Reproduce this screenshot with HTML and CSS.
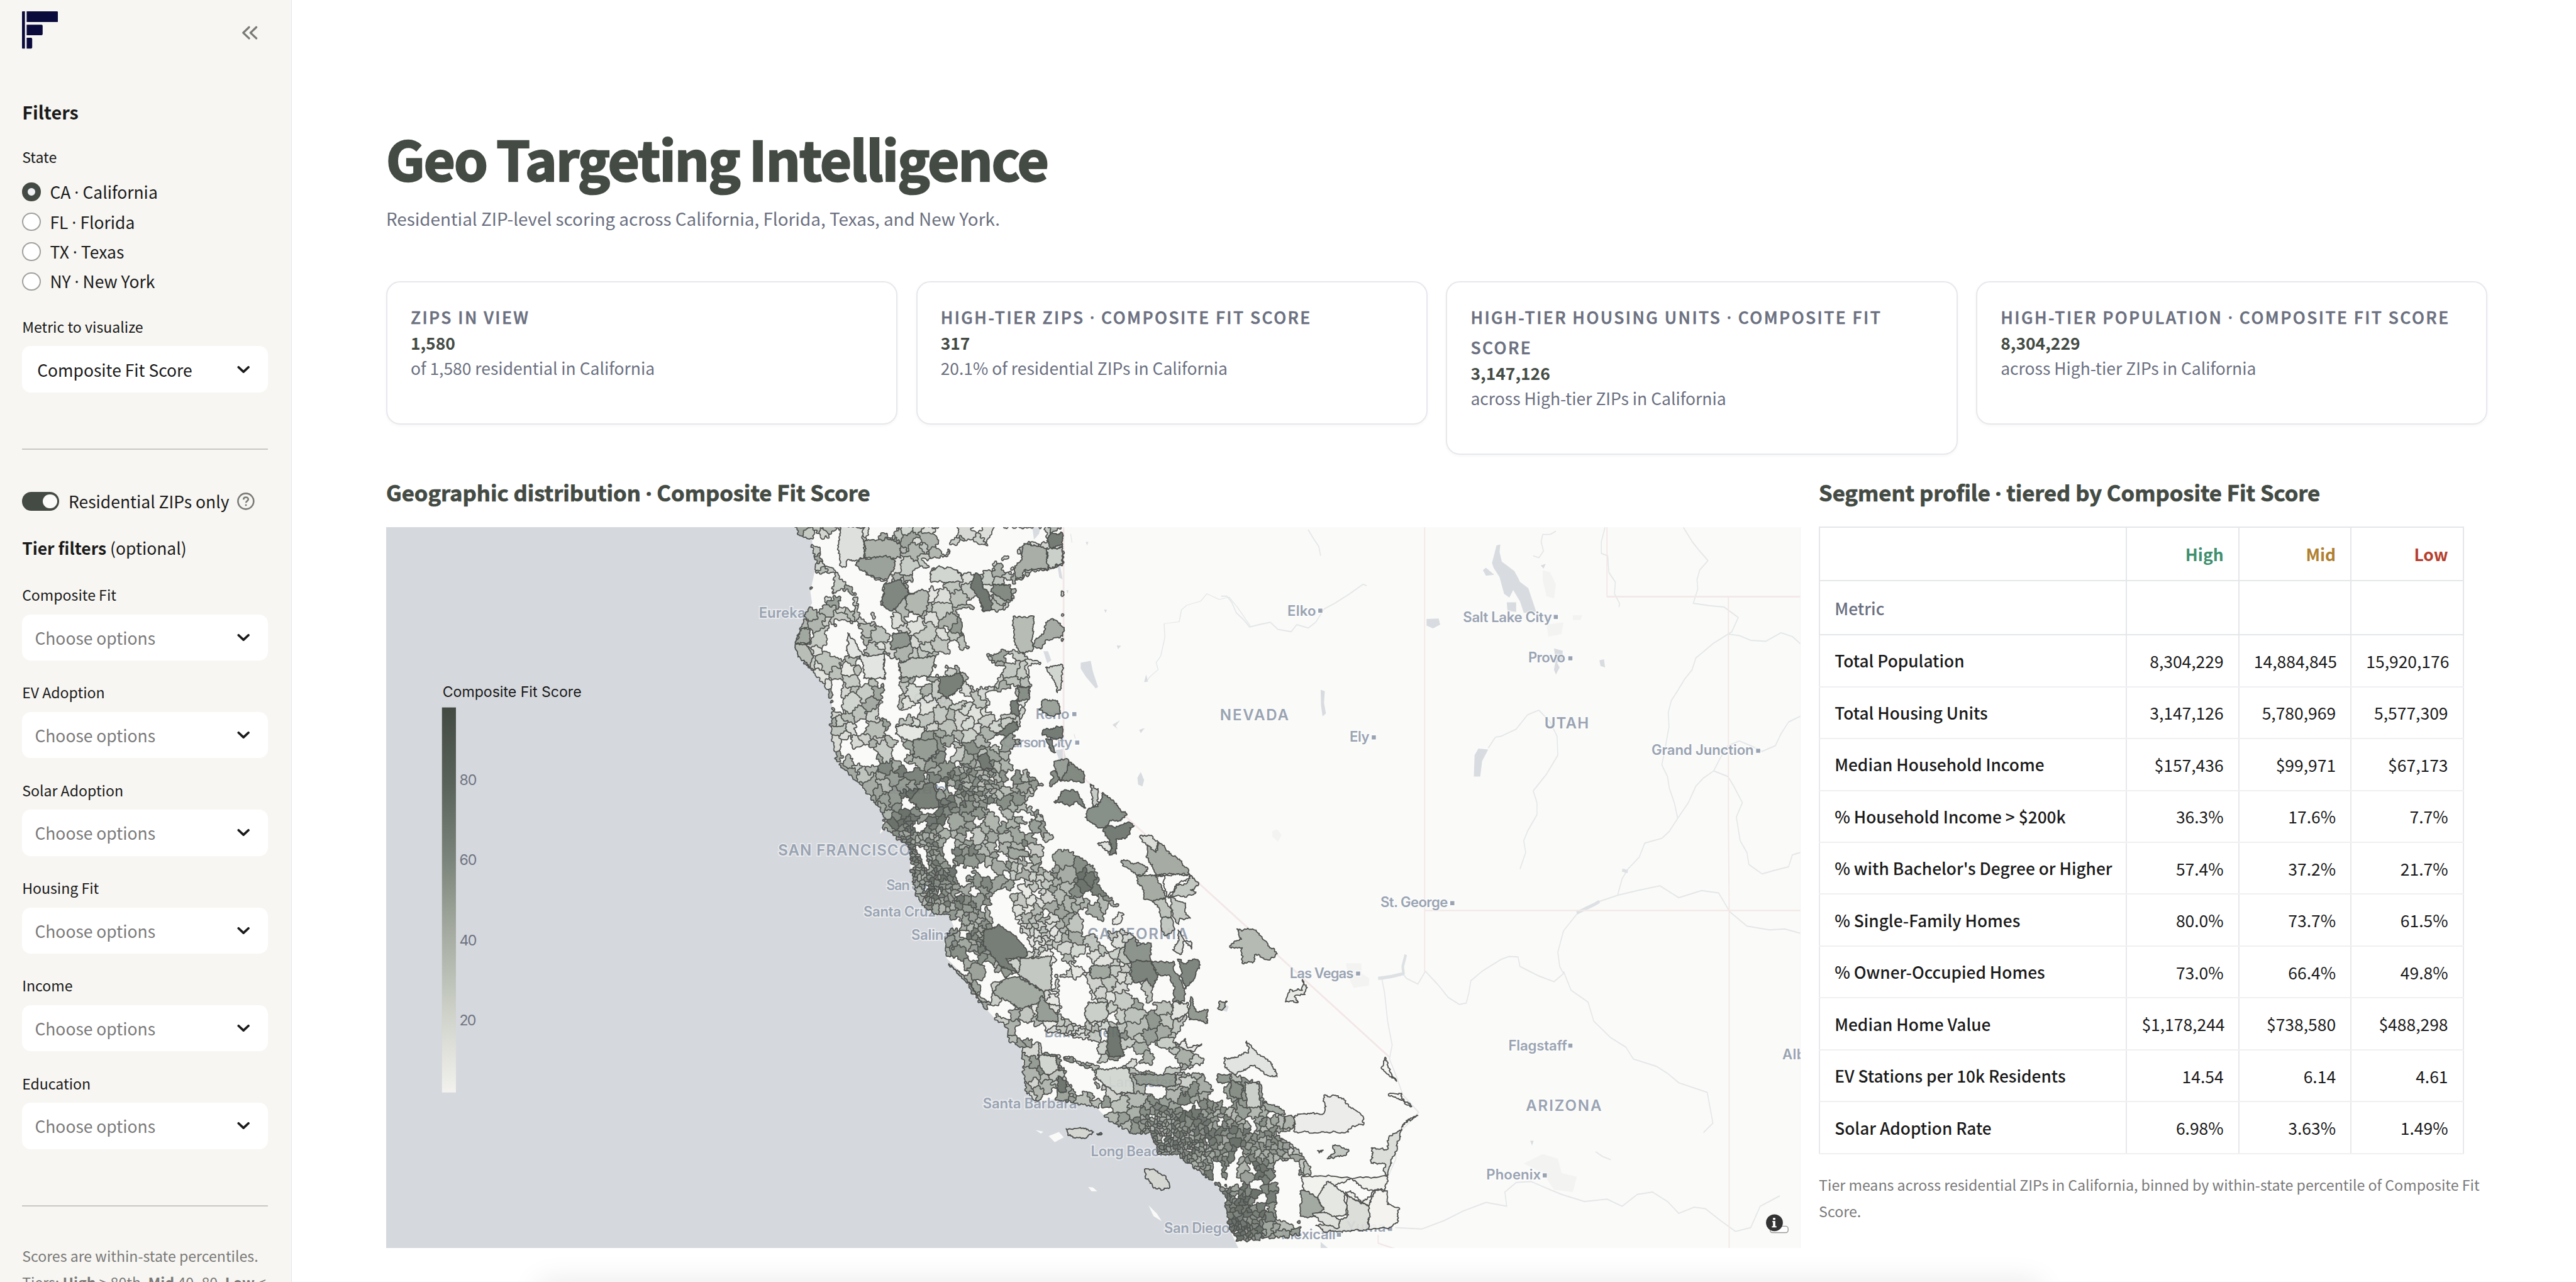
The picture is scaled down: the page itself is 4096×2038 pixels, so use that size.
FILE: index.html
```html
<!DOCTYPE html>
<html lang="en">

<head>
  <meta charset="UTF-8">
  <meta name="viewport" content="width=device-width, initial-scale=1.0">
  <title>Geo Targeting Intelligence</title>
  <link rel="stylesheet" href="styles.css">
</head>

<body>
  <div class="app">
    <aside class="sidebar">
      <div class="sidebar-head">
        <svg class="logo" viewBox="0 0 62 64">
          <path d="M0 1q0-1 1-1h4v64H1q-1 0-1-1z" />
          <path d="M8 0h52q2 0 2 2v14.500q0 2-2 2H8zM8 23h25.500q2 0 2 2v14q0 2-2 2H8zM8 45.500h7.500q2 0 2 2V62q0 2-2 2H8z" />
        </svg>
        <svg class="collapse" viewBox="0 0 28 24">
          <path d="M13 2.500L3 12l10 9.500M25.500 2.500L15.500 12l10 9.500" />
        </svg>
      </div>

      <h2>Filters</h2>
      <div class="label">State</div>
      <div class="radios">
        <div class="radio"><span class="dot on"></span><span>CA <i>·</i> California</span></div>
        <div class="radio"><span class="dot"></span><span>FL <i>·</i> Florida</span></div>
        <div class="radio"><span class="dot"></span><span>TX <i>·</i> Texas</span></div>
        <div class="radio"><span class="dot"></span><span>NY <i>·</i> New York</span></div>
      </div>

      <div class="label">Metric to visualize</div>
      <div class="select picked">Composite Fit Score<svg class="chevron" viewBox="0 0 22 14"><path d="M2.500 3L11 11l8.500-8" /></svg></div>

      <hr class="rule">

      <div class="toggle-row">
        <span class="toggle"></span>Residential ZIPs only
        <svg class="help" viewBox="0 0 30 30">
          <circle cx="15" cy="15" r="13.500" />
          <path d="M11 12.200c0-5.400 8.200-5.200 8.200-.6 0 3-3.900 3.100-3.900 6" />
          <circle class="help-dot" cx="15.200" cy="21.600" r="1.600" />
        </svg>
      </div>

      <p class="tier-title"><b>Tier filters</b> (optional)</p>

      <div class="filter">
        <div class="label">Composite Fit</div>
        <div class="select">Choose options<svg class="chevron" viewBox="0 0 22 14"><path d="M2.500 3L11 11l8.500-8" /></svg></div>
      </div>
      <div class="filter">
        <div class="label">EV Adoption</div>
        <div class="select">Choose options<svg class="chevron" viewBox="0 0 22 14"><path d="M2.500 3L11 11l8.500-8" /></svg></div>
      </div>
      <div class="filter">
        <div class="label">Solar Adoption</div>
        <div class="select">Choose options<svg class="chevron" viewBox="0 0 22 14"><path d="M2.500 3L11 11l8.500-8" /></svg></div>
      </div>
      <div class="filter">
        <div class="label">Housing Fit</div>
        <div class="select">Choose options<svg class="chevron" viewBox="0 0 22 14"><path d="M2.500 3L11 11l8.500-8" /></svg></div>
      </div>
      <div class="filter">
        <div class="label">Income</div>
        <div class="select">Choose options<svg class="chevron" viewBox="0 0 22 14"><path d="M2.500 3L11 11l8.500-8" /></svg></div>
      </div>
      <div class="filter">
        <div class="label">Education</div>
        <div class="select">Choose options<svg class="chevron" viewBox="0 0 22 14"><path d="M2.500 3L11 11l8.500-8" /></svg></div>
      </div>

      <hr class="rule">

      <p class="note">Scores are within-state percentiles.<br>Tiers: <b>High</b> <i>≥</i> 80th, <b>Mid</b> 40–80, <b>Low</b> &lt;</p>
    </aside>

    <main class="main">
      <h1>Geo Targeting Intelligence</h1>
      <p class="subtitle">Residential ZIP-level scoring across California, Florida, Texas, and New York.</p>

      <section class="cards">
        <div class="card">
          <div class="card-label">ZIPs in view</div>
          <div class="card-value">1,580</div>
          <div class="card-sub">of 1,580 residential in California</div>
        </div>
        <div class="card">
          <div class="card-label">High-tier ZIPs <i>·</i> Composite Fit Score</div>
          <div class="card-value">317</div>
          <div class="card-sub">20.1% of residential ZIPs in California</div>
        </div>
        <div class="card">
          <div class="card-label">High-tier housing units <i>·</i> Composite Fit Score</div>
          <div class="card-value">3,147,126</div>
          <div class="card-sub">across High-tier ZIPs in California</div>
        </div>
        <div class="card">
          <div class="card-label">High-tier population <i>·</i> Composite Fit Score</div>
          <div class="card-value">8,304,229</div>
          <div class="card-sub">across High-tier ZIPs in California</div>
        </div>
      </section>

      <section class="columns">
        <div class="col-map">
          <h3>Geographic distribution <i>·</i> Composite Fit Score</h3>
          <svg class="map" viewBox="664 906 2432 1240">
            <defs>
              <linearGradient id="scale" x1="0" y1="0" x2="0" y2="1">
                <stop offset="0" stop-color="#424a42" />
                <stop offset=".2" stop-color="#5a635a" />
                <stop offset=".4" stop-color="#7c857b" />
                <stop offset=".58" stop-color="#a4aa9f" />
                <stop offset=".8" stop-color="#cfd3ca" />
                <stop offset="1" stop-color="#f3f2ee" />
              </linearGradient>
            </defs>

            <rect class="water" x="664" y="906" width="2432" height="1240" />
            <path class="land" id="land" />

            <g class="land" transform="translate(1400 1450) scale(.7015 .4592)">
              <path d="M575 1095L600 1080 612 1100 590 1118ZM543 1073L562 1079 556 1086ZM672 1286L684 1288 694 1302 680 1302ZM820 1355L840 1385 852 1414 832 1395Z" />
            </g>

            <!-- lakes and urban areas -->
            <g class="lake" transform="translate(1250 890) scale(.574 .3954)">
              <path d="M1060 630L1090 622 1097 670 1112 735 1105 742 1075 690 1060 655ZM1230 1130L1240 1105 1250 1140 1245 1168 1232 1160ZM985 1010L1010 1005 1016 1045 995 1052ZM915 40L940 40 935 70 920 95ZM948 580L962 580 972 620 960 632ZM1130 398L1139 400 1134 413ZM1168 555L1181 556 1172 571ZM1250 715L1256 682 1262 712ZM1235 922L1252 914 1240 936ZM990 205L998 205 1006 268 996 260ZM1017 315L1023 315 1021 330ZM1075 105L1083 105 1079 120ZM1155 900L1178 880 1165 905 1170 918Z" />
            </g>
            <g class="lake" transform="translate(2100 890) scale(.6505 .8163)">
              <path d="M716 95L728 58 738 56 736 72 742 92 775 112 786 128 790 135 812 148 822 172 833 198 800 200 790 176 772 152 762 168 748 160 736 125 720 105ZM692 110L700 105 722 120 700 122ZM755 178L780 178 780 198 757 196ZM880 275L903 280 902 300 888 305 895 315 885 330 880 320 884 300ZM670 500L680 486 706 488 690 512 685 545 668 545ZM543 213L575 212 579 225 560 233 543 227ZM263 362L274 365 272 390 277 412 268 418 264 395ZM845 100L858 97 852 107ZM1000 300L1012 298 1015 315 1003 312ZM817 1312L826 1312 822 1322ZM5 1020L20 1030 15 1040 5 1038ZM263 1525L285 1540 263 1540Z" />
            </g>
            <g class="urban" transform="translate(2100 890) scale(.6505 .8163)">
              <path d="M330 938L370 938 372 960 392 970 390 985 350 990 335 965ZM850 110L870 115 885 140 880 170 860 165 850 130ZM860 225L905 220 900 245 865 250ZM800 1360L850 1340 890 1350 900 1380 940 1388 930 1420 880 1415 850 1380ZM135 660L148 656 160 668 150 682 136 672ZM930 205L955 205 950 215 930 215Z" />
            </g>

            <g class="river" transform="translate(1250 890) scale(.574 .3954)">
              <path d="M1258 710L1268 690 1292 660 1286 630 1300 600 1312 520 1310 460 1355 452 1362 400 1378 380 1420 362 1438 330 1475 355 1505 345 1530 390 1568 470M1030 70L1034 108M1040 940L1044 960" />
            </g>
            <g class="river" transform="translate(2100 890) scale(.6505 .8163)">
              <path d="M0 165L15 165 28 178 40 200 60 215 75 230 100 225 130 220 150 235 185 240 200 225 230 232 250 220 272 192 300 180 340 160 375 140 385 143" />
              <path d="M230 25L245 45 258 60 263 80M885 28L870 35 850 35 846 50 852 70 840 84 825 80" />
              <path d="M1015 20L1005 50 1005 75 1022 80 1025 115 1042 135 1040 160 1053 180 1052 188" />
              <path d="M1222 20L1245 50 1265 70 1287 90 1265 110 1258 130 1260 150 1248 180 1290 185 1330 188 1367 210 1350 240 1300 265 1275 282 1255 295 1245 320 1225 340 1210 360 1190 385 1182 410 1184 440 1175 480 1165 520 1180 545 1185 570 1198 600 1207 633" />
              <path d="M1341 245L1370 248 1400 258 1440 260 1480 242 1510 250 1531 265" />
              <path d="M1531 418L1500 430 1480 455 1465 480 1430 492 1400 480 1370 470 1340 480 1320 505 1302 533 1275 548 1255 565 1235 600 1207 633 1185 660 1165 675 1120 685 1105 715 1075 740 1060 760 1048 795 1000 808 960 822 940 835 905 870 890 915 895 945 905 960 880 977 840 965 815 955 790 945 785 925 760 924 740 930 690 955 660 975 655 1000 648 1022 630 1025 600 1010 575 985 540 955 520 982 490 970 480 960 425 972 432 1000 440 1060 452 1110 445 1140 465 1180 480 1215 522 1252 490 1280 460 1300 462 1350 440 1390" />
              <path class="wide" d="M415 970L450 966 482 960 480 945 488 920M940 832L985 815 1000 808M1060 742L1075 745" />
              <path d="M1302 533L1340 545 1355 565 1378 600 1362 630 1372 680 1390 705 1395 730 1430 750 1465 742 1500 735 1510 710 1531 705" />
              <path d="M706 485L725 462 740 460 780 445 810 415 840 405 870 430 888 460 890 500 860 540 825 575 835 600 835 625 810 660 800 680 805 705 790 740" />
              <path d="M1048 795L1100 785 1160 775 1210 800 1270 785 1315 790 1345 830 1390 860 1450 868 1490 866 1531 875" />
              <path d="M905 955L925 995 970 1020 985 1060 1030 1095 1070 1115 1090 1140 1150 1155 1180 1170 1210 1190 1285 1210 1292 1240 1300 1275 1275 1295" />
              <path d="M460 1495L530 1498 590 1480 640 1460 700 1442 755 1450 750 1420 780 1400 820 1398 860 1412 900 1425 960 1440 1020 1435 1060 1450 1100 1425 1140 1420 1180 1440 1210 1465 1250 1452 1280 1455 1320 1480 1360 1503 1400 1495 1425 1450 1477 1428M990 1335L1008 1345 1030 1352" />
            </g>

            <g class="border" transform="translate(2100 890) scale(.6505 .8163)">
              <path d="M538 20V956M538 827H1531M1020 20V166H1531M1341 166V635L1343 827V1540M415 1510V1528L480 1545M60 1520L415 1492" />
            </g>
            <path class="border" d="M1829 906V1306L2389 1817" />

            <g class="places">
              <text x="1305" y="1062" textLength="80">Eureka</text>
              <text x="1571" y="1210" textLength="58">Chico</text>
              <text x="1781" y="1236" textLength="58">Reno</text>
              <text x="1724" y="1285" textLength="120">Carson City</text>
              <text x="1524" y="1365" textLength="102">Sacramento</text>
              <text class="big" x="1338" y="1471" textLength="228">SAN FRANCISCO</text>
              <text x="1524" y="1530" textLength="94">San Jose</text>
              <text x="1485" y="1576" textLength="124">Santa Cruz</text>
              <text x="1567" y="1615" textLength="82">Salinas</text>
              <text x="1772" y="1608" textLength="70">Fresno</text>
              <text class="big" x="1870" y="1614" textLength="173">CALIFORNIA</text>
              <text x="1796" y="1783" textLength="137">Bakersfield</text>
              <text x="1906" y="1869" textLength="112">Lancaster</text>
              <text x="1690" y="1905" textLength="162">Santa Barbara</text>
              <text x="1876" y="1988" textLength="132">Long Beach</text>
              <text x="2002" y="2119" textLength="113">San Diego</text>
              <text x="2203" y="2130" textLength="94">Mexicali</text>
              <text x="2315" y="2117" textLength="68">Yuma</text>
              <text class="big" x="2098" y="1238" textLength="118">NEVADA</text>
              <text x="2321" y="1275" textLength="34">Ely</text>
              <text x="2214" y="1058" textLength="49">Elko</text>
              <text x="2516" y="1069" textLength="153">Salt Lake City</text>
              <text x="2628" y="1139" textLength="64">Provo</text>
              <text class="big" x="2656" y="1252" textLength="76">UTAH</text>
              <text x="2840" y="1298" textLength="176">Grand Junction</text>
              <text x="2374" y="1559" textLength="116">St. George</text>
              <text x="2218" y="1682" textLength="110">Las Vegas</text>
              <text x="2594" y="1806" textLength="101">Flagstaff</text>
              <text class="big" x="2624" y="1910" textLength="130">ARIZONA</text>
              <text x="2556" y="2028" textLength="94">Phoenix</text>
              <text x="3065" y="1821" textLength="155">Albuquerque</text>
              <path d="M1844 1224h7v7h-7zM1849 1273h7v7h-7zM2359 1264h7v7h-7zM2267 1046h7v7h-7zM2672 1057h7v7h-7zM2697 1128h7v7h-7zM3020 1287h7v7h-7zM2494 1549h7v7h-7zM2332 1670h7v7h-7zM2697 1794h7v7h-7zM2653 2017h7v7h-7zM2299 2119h7v7h-7zM2387 2109h7v7h-7z" />
            </g>

            <g class="zips" id="zips"></g>

            <g class="legend">
              <text class="legend-title" x="761" y="1198" textLength="239">Composite Fit Score</text>
              <rect x="760" y="1216" width="24" height="662" fill="url(#scale)" />
              <text x="790" y="1349" textLength="30">80</text>
              <text x="790" y="1487" textLength="30">60</text>
              <text x="790" y="1625" textLength="30">40</text>
              <text x="790" y="1763" textLength="29">20</text>
            </g>

            <g class="info">
              <rect x="3044" y="2108" width="31" height="11" rx="4" />
              <circle cx="3051.500" cy="2102" r="14.500" />
              <path d="M3048 2099h5v9h2v2h-8v-2h2v-7h-1zM3049 2093.500h4v3.500h-4z" />
            </g>
          </svg>
        </div>

        <div class="col-table">
          <h3>Segment profile <i>·</i> tiered by Composite Fit Score</h3>
          <table class="profile">
            <thead>
              <tr><th></th><th class="high">High</th><th class="mid">Mid</th><th class="low">Low</th></tr>
              <tr><th class="metric">Metric</th><th></th><th></th><th></th></tr>
            </thead>
            <tbody>
              <tr><th>Total Population</th><td>8,304,229</td><td>14,884,845</td><td>15,920,176</td></tr>
              <tr><th>Total Housing Units</th><td>3,147,126</td><td>5,780,969</td><td>5,577,309</td></tr>
              <tr><th>Median Household Income</th><td>$157,436</td><td>$99,971</td><td>$67,173</td></tr>
              <tr><th>% Household Income &gt; $200k</th><td>36.3%</td><td>17.6%</td><td>7.7%</td></tr>
              <tr><th>% with Bachelor's Degree or Higher</th><td>57.4%</td><td>37.2%</td><td>21.7%</td></tr>
              <tr><th>% Single-Family Homes</th><td>80.0%</td><td>73.7%</td><td>61.5%</td></tr>
              <tr><th>% Owner-Occupied Homes</th><td>73.0%</td><td>66.4%</td><td>49.8%</td></tr>
              <tr><th>Median Home Value</th><td>$1,178,244</td><td>$738,580</td><td>$488,298</td></tr>
              <tr><th>EV Stations per 10k Residents</th><td>14.54</td><td>6.14</td><td>4.61</td></tr>
              <tr><th>Solar Adoption Rate</th><td>6.98%</td><td>3.63%</td><td>1.49%</td></tr>
            </tbody>
          </table>
          <p class="caption">Tier means across residential ZIPs in California, binned by within-state percentile of Composite Fit Score.</p>
        </div>
      </section>
      <div class="dock-shadow"></div>
    </main>
  </div>
  <script src="map.js"></script>
</body>

</html>
```

FILE: styles.css
```css
html {
  font-size: 9.246px;
}

* {
  box-sizing: border-box;
}

body {
  margin: 0;
  height: 100vh;
  overflow: hidden;
  background: #fff;
  color: #1a1a1a;
  font-family: "Noto Sans CJK SC", "Noto Sans", sans-serif;
  font-size: 2.86rem;
}

h1, h2, h3, p {
  margin: 0;
}

/* separators and signs that are full width in the CJK face */
i {
  font-family: "Noto Sans", sans-serif;
  font-style: normal;
  line-height: 1;
}

.app {
  display: flex;
  height: 100vh;
}

/* sidebar */
.sidebar {
  flex: none;
  width: 50.15rem;
  height: 100vh;
  overflow: hidden;
  padding: 2rem 4rem 0 3.8rem;
  background: #f7f6f2;
  border-right: .2rem solid #e5e7eb;
}

.sidebar-head {
  display: flex;
  justify-content: space-between;
  height: 15.1rem;
}

.logo {
  width: 6.2rem;
  height: 6.4rem;
  fill: #0a0a3c;
}

.collapse {
  width: 2.8rem;
  height: 2.4rem;
  margin: 2.4rem 1.7rem 0 0;
  fill: none;
  stroke: #7a7a78;
  stroke-width: 3.6;
  stroke-linecap: round;
  stroke-linejoin: round;
}

.sidebar h2 {
  font-size: 3.12rem;
  line-height: 4.4rem;
  margin-bottom: 3.5rem;
}

.label {
  font-size: 2.5rem;
  line-height: 4rem;
}

.radios {
  margin: 1.45rem 0 3.2rem;
}

.radio {
  display: flex;
  align-items: center;
  height: 5.13rem;
  line-height: 5rem;
}

.dot {
  width: 3.2rem;
  height: 3.2rem;
  margin-right: 1.6rem;
  border: 2px solid #a0a09e;
  border-radius: 50%;
  background: #fff;
}

.dot.on {
  border: 1rem solid #444b44;
  background: #eef0f3;
}

.select {
  display: flex;
  align-items: center;
  justify-content: space-between;
  height: 7.95rem;
  margin-top: 1.35rem;
  padding: 0 3.1rem 0 2.2rem;
  border-radius: 1.5rem;
  background: #fff;
  color: #7a7a7a;
}

.select.picked {
  padding-left: 2.6rem;
  color: #1a1a1a;
}

.chevron {
  width: 2.2rem;
  height: 1.4rem;
  fill: none;
  stroke: #1a1a1a;
  stroke-width: 4;
  stroke-linecap: round;
  stroke-linejoin: round;
}

.rule {
  height: 2px;
  margin: 9.7rem 0 0;
  border: 0;
  background: #c8c8c5;
}

.toggle-row {
  display: flex;
  align-items: center;
  height: 5.2rem;
  margin-top: 6.2rem;
}

.toggle {
  width: 6.4rem;
  height: 3.2rem;
  margin-right: 1.6rem;
  padding: .4rem;
  border-radius: 1.6rem;
  background: #444b44;
}

.toggle::after {
  content: "";
  display: block;
  width: 2.4rem;
  height: 2.4rem;
  margin-left: auto;
  border-radius: 50%;
  background: #fbfbf9;
}

.help {
  width: 3rem;
  height: 3rem;
  margin-left: 1.4rem;
  fill: none;
  stroke: #7a7a78;
  stroke-width: 2.8;
}

.help-dot {
  fill: #7a7a78;
  stroke: none;
}

.tier-title {
  line-height: 5.2rem;
  margin: 2.85rem 0 3.45rem;
}

.filter + .filter {
  margin-top: 3.5rem;
}

.note {
  margin-top: 6.25rem;
  color: #7a7a78;
  font-size: 2.5rem;
  line-height: 4.48rem;
  white-space: nowrap;
}

/* main column */
.main {
  position: relative;
  flex: 1;
  padding: 20.9rem 15.2rem 0 16.25rem;
}

h1 {
  color: #444b44;
  font-size: 9.3rem;
  line-height: 12.5rem;
  letter-spacing: -.02em;
  word-spacing: -.03em;
  -webkit-text-stroke: .28rem #444b44;
}

.subtitle {
  margin-top: 1.65rem;
  color: #6b7080;
  font-size: 3.01rem;
  line-height: 5.1rem;
}

.cards {
  display: grid;
  grid-template-columns: repeat(4, 1fr);
  gap: 3.2rem;
  align-items: start;
  margin-top: 8.25rem;
}

.card {
  padding: 3.35rem 4rem 7rem;
  border: 2px solid #e7e8ec;
  border-radius: 2.4rem;
  background: #fff;
  box-shadow: 0 .2rem .6rem rgba(0, 0, 0, .04);
}

.card-label {
  color: #6b7080;
  font-size: 2.86rem;
  font-weight: 500;
  line-height: 5.15rem;
  letter-spacing: .093em;
  text-transform: uppercase;
  -webkit-text-stroke: .06rem #6b7080;
}

.card-value {
  color: #444b44;
  font-weight: 700;
  line-height: 3.7rem;
}

.card-sub {
  color: #6b7080;
  line-height: 5rem;
}

.columns {
  display: flex;
  gap: 3.2rem;
  margin-top: 3.5rem;
}

.col-map {
  flex: none;
  width: 243.2rem;
}

.col-table {
  flex: 1;
}

h3 {
  margin-bottom: 2.95rem;
  color: #444b44;
  font-size: 3.74rem;
  line-height: 6rem;
  white-space: nowrap;
  -webkit-text-stroke: .08rem #444b44;
}

.col-table h3 {
  margin-bottom: 2.8rem;
}

/* map */
.map {
  display: block;
  width: 243.2rem;
  height: 124rem;
}

.water {
  fill: #d5d8dd;
}

.land {
  fill: #fafaf8;
}

.lake {
  fill: #d8dce0;
}

.urban {
  fill: #f3f3f2;
}

.river, .border {
  fill: none;
  stroke-linejoin: round;
}

.river {
  stroke: #e3e6e8;
  stroke-width: 2.6;
}

.river .wide {
  stroke: #dde1e4;
  stroke-width: 7;
}

.border {
  stroke: #f2e7e7;
  stroke-width: 3;
}

.places {
  fill: #99a3b2;
  stroke: rgba(255, 255, 255, .45);
  stroke-width: 4;
  paint-order: stroke;
  font-family: Inter, sans-serif;
  font-size: 24px;
  font-weight: 600;
}

.places .big {
  font-size: 26px;
}

.zips {
  opacity: .93;
}

.zips path {
  stroke: #434543;
  stroke-width: 2;
  stroke-linejoin: round;
}

.zips .fill {
  stroke-width: .6;
}

.legend {
  fill: #6f7482;
  font-family: Inter, sans-serif;
  font-size: 25px;
}

.legend-title {
  fill: #1a1a1a;
}

.info {
  fill: #333;
}

.info rect {
  fill: #fff;
  stroke: #999;
  stroke-width: 1.5;
}

.info path {
  fill: #fff;
}

/* table */
.profile {
  width: 110.8rem;
  table-layout: fixed;
  border-collapse: collapse;
  background: #fff;
}

.profile th,
.profile td {
  width: 19.3rem;
  height: 8.92rem;
  padding: 0 2.5rem;
  border: 2px solid #e8e8ea;
  border-bottom-color: #f0f0f2;
  font-weight: 400;
  text-align: right;
  white-space: nowrap;
}

.profile th:first-child {
  width: 52.8rem;
  text-align: left;
  font-weight: 500;
}

.profile tbody th {
  font-size: 2.84rem;
}

.profile thead th {
  height: 9.28rem;
  border-color: #e5e6e9;
  font-weight: 700;
}

.profile .high { color: #3f8f6f; }
.profile .mid { color: #b0802f; }
.profile .low { color: #b5402f; }

.profile thead .metric {
  color: #6b7080;
  font-weight: 500;
}

.caption {
  margin-top: 3.1rem;
  color: #7a7a7a;
  font-size: 2.51rem;
  line-height: 4.48rem;
}

.dock-shadow {
  position: absolute;
  left: 42rem;
  bottom: -4rem;
  width: 259rem;
  height: 4rem;
  border-radius: 2rem;
  box-shadow: 0 0 5rem rgba(0, 0, 0, .1);
}
```

FILE: map.js
```js
// three survey sheets, each with its own origin and scale
const north = (x, y) => [1250 + x * 0.574, 890 + y * 0.3954]
const south = (x, y) => [1400 + x * 0.7015, 1450 + y * 0.4592]
const east = (x, y) => [1850 + x * 0.3827, 1150 + y * 0.3954]

function pts(sheet, text) {
  return text.trim().split(/\s+/).map(p => sheet(...p.split(',').map(Number)))
}

let seed = 20240
function rnd() {
  seed = (seed * 1664525 + 1013904223) % 4294967296
  return seed / 4294967296
}

function hash(a, b) {
  const s = Math.sin(a * 12.9898 + b * 78.233) * 43758.5453
  return s - Math.floor(s)
}

function noise(x, y) {
  const xi = Math.floor(x), yi = Math.floor(y)
  const u = x - xi, v = y - yi
  const top = hash(xi, yi) * (1 - u) + hash(xi + 1, yi) * u
  const bottom = hash(xi, yi + 1) * (1 - u) + hash(xi + 1, yi + 1) * u
  return top * (1 - v) + bottom * v
}

function inside(p, poly) {
  let hit = false
  for (let i = 0, j = poly.length - 1; i < poly.length; j = i++) {
    const [xi, yi] = poly[i], [xj, yj] = poly[j]
    if ((yi > p[1]) !== (yj > p[1]) && p[0] < (xj - xi) * (p[1] - yi) / (yj - yi) + xi) hit = !hit
  }
  return hit
}

// midpoint displacement, long edges stay nearly straight
function rough(a, b, amp) {
  const out = []
  const split = (s, e, depth) => {
    const dx = e[0] - s[0], dy = e[1] - s[1]
    const len = Math.hypot(dx, dy)
    if (depth === 0 || len < 3) return
    const k = (rnd() - 0.5) * amp * Math.min(1, 4 / len)
    const m = [(s[0] + e[0]) / 2 - dy * k, (s[1] + e[1]) / 2 + dx * k]
    split(s, m, depth - 1)
    out.push(m)
    split(m, e, depth - 1)
  }
  split(a, b, 5)
  return out
}

function toPath(poly, amp) {
  let d = ''
  poly.forEach((p, i) => {
    const line = [p, ...(amp ? rough(p, poly[(i + 1) % poly.length], amp) : [])]
    line.forEach(q => { d += (d ? 'L' : 'M') + q[0].toFixed(1) + ' ' + q[1].toFixed(1) })
  })
  return d + 'Z'
}

const coast = [
  ...pts(north, `208,40 215,75 240,85 255,95 258,150 267,180 262,240 250,320 255,370 235,430 220,480 205,545 213,605
    250,655 270,690 305,745 318,840 310,910 322,985 330,1060 385,1140 430,1215 455,1255 472,1300 458,1375 478,1345 500,1385
    548,1430 550,1530`),
  ...pts(south, `238,110 250,190 270,235 300,265 330,265 342,310 320,365 325,430 365,490 395,575 440,650 475,690 478,740
    512,770 512,840 520,930 540,965 590,958 640,972 690,985 725,1040 785,1088 825,1080 845,1165 890,1165 970,1255 1005,1310
    1020,1450 1040,1515`)
]

document.querySelector('#land').setAttribute('d', toPath([...coast, [3096, 2146], [3096, 906]], 0))

// the part of the state that is split into ZIP areas
const covered = [
  ...coast.slice(0, -1),
  ...pts(south, `1040,1490 1190,1465 1190,1400 1140,1320 1130,1245 1222,1235 1190,1150 1130,1085 1175,1070 1172,1010
    1100,965 1095,900 1020,860 885,860 960,815 880,740 915,650 905,595 830,595 825,440 790,350 750,320 760,240 710,170
    690,95 600,0`),
  ...pts(north, '950,1350 960,1220 990,1140 1005,1060 1006,900 1006,800 1006,640 1006,430 1006,200 1006,34 208,34')
]

const gaps = [
  pts(north, '590,180 670,160 665,125 720,95 780,130 800,40 960,40 955,110 890,110 850,170 800,180 790,230 750,250 700,240 610,212'),
  pts(north, '870,270 1008,200 1008,640 950,650 900,600 860,570 780,590 790,620 830,660 800,730 740,750 700,650 610,640 620,600 720,570 690,400 830,400 860,340'),
  pts(north, '345,215 385,205 430,255 475,270 465,340 440,330 440,450 400,450 385,330 330,260'),
  pts(north, '275,90 335,90 340,215 300,210 280,170'),
  pts(north, '255,240 320,240 320,350 255,340'),
  pts(north, '330,450 390,450 420,590 365,600 330,540'),
  pts(north, '470,600 515,610 520,760 505,900 450,870 475,700'),
  pts(north, '305,700 345,700 350,850 320,850'),
  pts(north, '780,760 870,740 860,850 780,850'),
  pts(north, '900,640 1010,640 1010,1080 985,1090 960,1180 920,1130 885,1080 890,1000 860,950 890,860 910,740'),
  pts(north, '930,1160 1090,1160 1130,1250 1130,1420 1000,1440 970,1330 910,1260'),
  pts(south, '640,20 800,-20 800,350 760,330 755,240 700,160 690,95'),
  pts(south, '430,200 460,170 480,200 500,300 540,400 520,420 470,330 430,270'),
  pts(south, '600,500 670,495 680,600 660,690 600,640'),
  pts(south, '560,705 620,720 700,745 700,830 620,800 560,780'),
  pts(south, '600,800 690,850 690,940 630,930 620,870'),
  pts(south, '400,510 435,510 435,590 405,580'),
  pts(south, '840,500 880,490 880,595 840,595'),
  pts(south, '790,820 850,830 840,860 780,850'),
  pts(south, '1130,1310 1190,1310 1190,1440 1130,1400'),
  pts(south, '1130,1190 1190,1180 1195,1250 1130,1240'),
  pts(south, '975,1180 1000,1190 1010,1290 980,1260'),
  pts(south, '345,95 370,100 385,160 360,160'),
  pts(south, '250,10 270,10 285,90 270,95'),
  pts(north, '560,1325 590,1325 595,1360 565,1370')
]

// [x, y, radius, cell size, darkness]
const metros = [
  [1578, 1448, 42, 4.6, 0.9],
  [1570, 1478, 30, 3.8, 0.95],
  [1612, 1522, 32, 4.4, 1],
  [1679, 1345, 40, 6, 0.5],
  [1615, 1370, 60, 12, 0.95],
  [2000, 1945, 42, 3.6, 0.9],
  [2040, 1985, 46, 4, 1],
  [2085, 1945, 60, 8, 0.8],
  [2125, 2085, 55, 7, 1],
  [2130, 2118, 28, 4, 0.95],
  [2180, 1975, 55, 9, 0.7],
  [1790, 1605, 34, 7, 0.1],
  [1850, 1730, 50, 9, 0.1],
  [1920, 1640, 60, 12, 0.15],
  [1660, 1590, 50, 9, 0.75],
  [1700, 1460, 90, 12, 0.55],
  [1740, 1400, 90, 13, 0.7],
  [1780, 1540, 60, 12, 0.1],
  [1860, 1510, 60, 13, 1]
]

function zipSize(x, y) {
  let size = 16
  for (const [mx, my, r, s] of metros) {
    const d = Math.hypot(x - mx, y - my) / r
    if (d < 1.3) size = Math.min(size, s + Math.max(0, d - 0.75) * 14)
  }
  return size * (0.6 + 0.85 * noise(x / 30, y / 24))
}

const ramp = [[242, 241, 237], [217, 220, 215], [190, 195, 188], [160, 167, 159], [128, 136, 128], [96, 104, 97]]
function colour(t) {
  const k = Math.max(0, Math.min(0.999, t)) * (ramp.length - 1)
  const i = Math.floor(k)
  return 'rgb(' + ramp[i].map((c, n) => Math.round(c + (ramp[i + 1][n] - c) * (k - i))).join(',') + ')'
}

function score(x, y) {
  let weight = 0.5
  let sum = (y < 1280 ? 0.38 : 0.5) * weight
  for (const [mx, my, r, , dark] of metros) {
    const w = Math.exp(-(((x - mx) ** 2 + (y - my) ** 2) / (r * r))) * 2
    sum += w * dark
    weight += w
  }
  return sum / weight + (noise(x / 30 + 5, y / 30) - 0.5) * 0.35 + (rnd() - 0.5) * 0.45
}

// ZIP centres
const centres = []
for (let i = 0; i < 70000; i++) {
  const p = [1350 + rnd() * 930, 895 + rnd() * 1250]
  const r = zipSize(p[0], p[1])
  if (!inside(p, covered)) continue
  if (centres.every(c => (c.x - p[0]) ** 2 + (c.y - p[1]) ** 2 >= r * r)) {
    const rural = r > 9
    centres.push({
      x: p[0],
      y: p[1],
      pull: rural ? 0.5 + rnd() : 1,
      blank: rnd() < (rural ? 0.1 + 0.25 * noise(p[0] / 26 + 9, p[1] / 26) : 0.02),
      fill: colour(score(p[0], p[1])),
      d: ''
    })
  }
}

// small tiles, each belongs to the ZIP that pulls hardest
const STEP = 4
const X0 = 1350, Y0 = 892
const COLS = 232, ROWS = 314
const tiles = []
for (let j = 0; j < ROWS; j++) {
  for (let i = 0; i < COLS; i++) {
    const x = X0 + (i + 0.5 + (rnd() - 0.5) * 0.9) * STEP
    const y = Y0 + (j + 0.5 + (rnd() - 0.5) * 0.9) * STEP
    tiles.push({ x, y, zip: -1 })
  }
}

for (const t of tiles) {
  if (!inside([t.x, t.y], covered)) continue
  // bend the plane a little so the outlines wander
  const bend = Math.min(9, zipSize(t.x, t.y) * 0.7)
  const x = t.x + (noise(t.x / 7 + 40, t.y / 7) - 0.5) * bend
  const y = t.y + (noise(t.x / 7, t.y / 7 + 70) - 0.5) * bend
  if (gaps.some(g => inside([x, y], g))) continue
  let best = Infinity
  centres.forEach((c, n) => {
    const dx = c.x - x, dy = c.y - y
    if (Math.abs(dx) > 45 || Math.abs(dy) > 45) return
    const d = Math.hypot(dx, dy) / c.pull
    if (d < best) { best = d; t.zip = n }
  })
  if (t.zip >= 0 && centres[t.zip].blank) t.zip = -1
}

let lines = ''
function shape(i, j) {
  const t = tiles[j * COLS + i]
  const s = STEP * 1.5
  // every corner remembers the tile on the other side of the edge that follows
  let poly = [[t.x - s, t.y - s, -1], [t.x + s, t.y - s, -1], [t.x + s, t.y + s, -1], [t.x - s, t.y + s, -1]]
  for (let b = Math.max(0, j - 2); b <= Math.min(ROWS - 1, j + 2); b++) {
    for (let a = Math.max(0, i - 2); a <= Math.min(COLS - 1, i + 2); a++) {
      if (a === i && b === j) continue
      const q = tiles[b * COLS + a]
      const mx = (t.x + q.x) / 2, my = (t.y + q.y) / 2
      const nx = q.x - t.x, ny = q.y - t.y
      const side = v => (v[0] - mx) * nx + (v[1] - my) * ny
      const next = []
      poly.forEach((v, n) => {
        const w = poly[(n + 1) % poly.length]
        const sv = side(v), sw = side(w)
        if (sv <= 0) next.push(v)
        if ((sv <= 0) !== (sw <= 0)) {
          const k = sv / (sv - sw)
          const cut = [v[0] + (w[0] - v[0]) * k, v[1] + (w[1] - v[1]) * k]
          next.push([...cut, sv <= 0 ? b * COLS + a : v[2]])
        }
      })
      poly = next
    }
  }
  centres[t.zip].d += 'M' + poly.map(v => v[0].toFixed(1) + ' ' + v[1].toFixed(1)).join('L') + 'Z'
  poly.forEach((v, n) => {
    const other = v[2] < 0 ? -1 : tiles[v[2]].zip
    if (other === t.zip || other > t.zip) return
    const w = poly[(n + 1) % poly.length]
    lines += 'M' + v[0].toFixed(1) + ' ' + v[1].toFixed(1) + 'L' + w[0].toFixed(1) + ' ' + w[1].toFixed(1)
  })
}

for (let j = 0; j < ROWS; j++) {
  for (let i = 0; i < COLS; i++) {
    if (tiles[j * COLS + i].zip >= 0) shape(i, j)
  }
}

const NS = 'http://www.w3.org/2000/svg'
const layer = document.querySelector('#zips')
function draw(d, fill) {
  const path = document.createElementNS(NS, 'path')
  path.setAttribute('d', d)
  path.setAttribute('fill', fill)
  layer.appendChild(path)
  return path
}

for (const c of centres) {
  if (!c.d) continue
  const path = draw(c.d, c.fill)
  path.setAttribute('class', 'fill')
  path.style.stroke = c.fill
}
draw(lines, 'none')

// the large rural areas
const big = [
  [north, '#b2b8b0', '858,428 920,428 918,500 915,580 878,585 862,540 858,480'],
  [north, '#a0a79f', '975,438 1006,475 1006,515 960,530 940,570 920,560 925,530 950,500 955,455'],
  [north, '#a3a9a1', '890,112 960,130 965,225 890,228 888,265 865,265 862,210 880,185'],
  [north, '#6c736c', '968,65 1005,65 1005,120 975,132 958,100'],
  [north, '#c9cdc8', '960,135 1006,125 1006,198 985,202 970,222 957,180'],
  [north, '#d0d4cf', '955,650 1006,640 1006,710 990,760 975,690'],
  [north, '#dcdfdb', '338,40 410,40 410,178 360,185 358,210 342,210 332,120'],
  [north, '#a8aea6', '412,103 445,100 480,85 520,110 522,175 412,173'],
  [north, '#949c94', '400,178 490,170 505,190 500,225 480,268 430,250 385,205'],
  [north, '#d0d4cf', '610,235 630,215 665,215 700,240 708,278 610,278'],
  [north, '#777f78', '470,290 520,265 545,330 520,370 490,405 465,380'],
  [north, '#adb3ab', '535,340 575,315 600,320 605,375 580,430 535,395'],
  [north, '#666e67', '745,240 758,250 765,300 780,320 795,400 770,405 745,330 730,290'],
  [north, '#7b837b', '800,290 845,290 855,360 820,350 790,320'],
  [north, '#858e86', '500,500 540,495 552,550 490,570'],
  [north, '#bfc4bd', '515,630 560,610 622,600 605,690 520,700'],
  [north, '#e2e4e1', '362,500 410,600 470,590 470,700 410,698 400,600 365,610'],
  [north, '#6f776f', '640,690 665,690 698,668 708,700 700,740 660,785 632,760'],
  [north, '#e4e6e2', '505,908 592,908 580,960 555,975 505,940'],
  [north, '#8e968e', '560,965 625,965 635,1010 600,1060 560,1040'],
  [north, '#9ba29a', '222,485 245,482 248,545 205,545'],
  [north, '#b5bab3', '205,548 240,548 258,600 250,650 213,605'],
  [north, '#959d95', '945,795 990,795 1000,850 965,860 935,835'],
  [north, '#7f877f', '870,735 905,735 905,790 875,800'],
  [north, '#6c746d', '850,800 870,795 875,860 850,850'],
  [north, '#6b736c', '950,920 1006,908 1006,955 970,960 945,945'],
  [north, '#777f78', '955,962 975,965 985,1020 972,1015'],
  [north, '#919991', '980,1060 1022,1050 1025,1090 1000,1145'],
  [north, '#7a827a', '1028,1062 1072,1120 1068,1152 1035,1140 1000,1145 1020,1090'],
  [north, '#757d76', '980,1235 1010,1185 1050,1190 1075,1262 1050,1235 1030,1250 1005,1235'],
  [north, '#6c746d', '835,905 870,885 872,920 835,950 805,945'],
  [north, '#69716a', '750,1035 780,1025 800,1090 765,1090'],
  [north, '#70776f', '590,1160 615,1150 635,1260 580,1265 545,1230'],
  [north, '#9aa199', '840,1430 890,1445 915,1475 850,1480'],
  [east, '#7f8881', '120,537 228,628 220,645 195,660 150,665 135,690 90,683 42,645 60,605 100,598'],
  [east, '#6b736c', '128,690 150,680 180,690 215,675 235,665 262,682 242,690 243,712 215,735 180,740 182,805 150,808 160,770 150,740 132,725'],
  [east, '#e0e2de', '98,760 150,755 160,780 145,800'],
  [east, '#d8dbd6', '290,723 340,723 370,752 360,795 325,770 300,745'],
  [east, '#a0a79e', '322,765 360,797 372,752 508,875 508,895 362,895 345,850 328,840 320,820'],
  [east, '#a5aba4', '205,832 285,845 320,860 320,880 290,895 250,880 210,855'],
  [east, '#a0a79e', '278,897 362,897 385,940 410,990 345,1012 305,1000 300,950 275,920'],
  [east, '#fafaf8', '362,897 515,897 445,945 440,970 410,990 395,940 400,905'],
  [east, '#c0c5be', '515,900 552,937 515,960 540,970 525,982 430,990 415,995 445,965 450,945 495,935'],
  [east, '#c0c5be', '430,990 465,1010 493,1018 495,1068 515,1083 468,1083 462,1110 440,1080 428,1040'],
  [east, '#b9beb7', '345,1012 400,995 425,1040 430,1083 388,1083 375,1040'],
  [east, '#c0c5be', '388,1083 430,1083 440,1135 400,1160 385,1135'],
  [east, '#d6d9d4', '460,1135 485,1175 475,1240 435,1220 458,1190'],
  [east, '#e2e4e1', '492,1183 516,1183 520,1217'],
  [east, '#c5c9c4', '65,500 100,520 95,570 110,580 80,600 75,555'],
  [east, '#b0b6ae', '724,1130 795,1130 905,1238 865,1265 810,1240 795,1278 748,1280 748,1212 692,1210 720,1182 745,1175'],
  [east, '#e6e8e4', '1018,1350 1040,1385 1030,1415 985,1420 1000,1447 942,1447 960,1397 1018,1397'],
  [east, '#858d86', '222,1190 265,1165 275,1205 300,1192 338,1192 335,1270 250,1272 215,1230'],
  [east, '#737a73', '245,1272 340,1270 368,1330 345,1385 320,1345 270,1365 245,1335'],
  [east, '#838b83', '342,1270 438,1270 440,1310 465,1340 490,1390 488,1445 435,1445 445,1390 420,1330 370,1330'],
  [east, '#757e76', '457,1262 490,1280 525,1262 555,1270 555,1303 530,1350 495,1390 480,1360 470,1300'],
  [east, '#8b938b', '517,1425 545,1490 590,1480 592,1540 565,1530 510,1525'],
  [east, '#b0b6ae', '645,1445 680,1445 660,1480 642,1480'],
  [east, '#9ba29a', '72,1290 150,1290 155,1340 72,1345'],
  [east, '#c8ccc6', '60,1447 140,1447 148,1500 120,1530 60,1535 40,1500'],
  [east, '#e3e5e1', '440,1450 505,1450 505,1490 440,1525 425,1510'],
  [south, '#6d756e', '418,325 455,305 480,330 520,395 520,420 470,430 500,485 460,460 415,380'],
  [south, '#c0c5be', '505,430 580,420 580,550 560,555 500,490'],
  [south, '#9da49c', '470,500 500,500 562,555 560,600 500,618 440,560'],
  [south, '#909890', '560,570 598,650 598,668 545,660 550,600'],
  [south, '#afb5ad', '330,450 365,490 408,575 425,592 408,590 385,530'],
  [south, '#666e67', '722,690 745,690 760,795 722,795'],
  [south, '#d0d4cd', '548,790 595,795 600,850 575,870 555,840'],
  [south, '#666e67', '598,870 620,890 618,930 598,925'],
  [south, '#d2d6d1', '690,845 770,845 785,935 740,935 692,880'],
  [south, '#8f978f', '780,865 885,865 885,910 820,900 790,900'],
  [south, '#c8cdc7', '1055,895 1090,900 1095,985 1060,990'],
  [south, '#7f877f', '1025,885 1050,905 1050,955 1020,945'],
  [south, '#9fa69f', '1100,970 1140,985 1155,1015 1135,1012 1105,1000'],
  [south, '#8a928a', '990,862 1020,862 1020,895 990,895'],
  [south, '#e0e3df', '1005,805 1040,795 1065,780 1060,740 1090,790 1120,820 1135,873 1105,865 1080,830 1030,865 1008,840'],
  [south, '#e9eae7', '892,760 910,730 915,765 950,750 930,780'],
  [south, '#ecede9', '1250,942 1285,945 1320,990 1345,1020 1348,1050 1310,1070 1310,1080 1178,1080 1178,1020 1210,1010 1250,1010'],
  [south, '#a9afa7', '1155,1022 1178,1022 1172,1068 1150,1068'],
  [south, '#dadcd8', '1440,1068 1425,1160 1405,1245 1395,1225 1400,1200 1366,1197 1366,1140 1405,1145 1410,1095'],
  [south, '#f6f6f3', '1400,800 1410,850 1428,890 1410,870 1390,840'],
  [south, '#f6f6f3', '1408,938 1440,935 1440,955 1465,985 1430,955'],
  [south, '#f6f6f3', '1480,1018 1455,1040 1440,1062 1450,1045'],
  [south, '#c0c5be', '1272,1130 1310,1145 1305,1165 1258,1180 1275,1160'],
  [south, '#d6d9d4', '1234,1150 1248,1148 1238,1158'],
  [south, '#9da49c', '1192,1300 1225,1300 1250,1375 1220,1398 1192,1395'],
  [south, '#f1f1ee', '1195,1247 1405,1247 1400,1300 1370,1300 1345,1290 1315,1255 1270,1290 1260,1265 1240,1330 1200,1290'],
  [south, '#f4f3f0', '1375,1300 1405,1300 1405,1350 1435,1365 1430,1420 1410,1438 1360,1445 1360,1350'],
  [south, '#e4e6e2', '1260,1265 1300,1310 1305,1390 1255,1400 1225,1395 1250,1370 1235,1330'],
  [south, '#eeeeeb', '1300,1310 1315,1300 1345,1345 1375,1300 1360,1355'],
  [south, '#dadcd8', '1305,1310 1360,1360 1360,1445 1255,1455 1230,1430 1290,1410 1310,1390'],
  [south, '#dfe1dd', '1222,1385 1255,1382 1290,1410 1285,1440 1240,1415'],
  [south, '#d3d6d1', '618,1068 650,1065 685,1080 670,1098 640,1103 622,1092'],
  [south, '#d3d6d1', '810,1220 835,1222 862,1245 872,1285 855,1297 830,1285 812,1250'],
  [south, '#777f78', '693,1087 706,1087 700,1090']
]

for (const [sheet, fill, text] of big) draw(toPath(pts(sheet, text), 0.9), fill)
```
